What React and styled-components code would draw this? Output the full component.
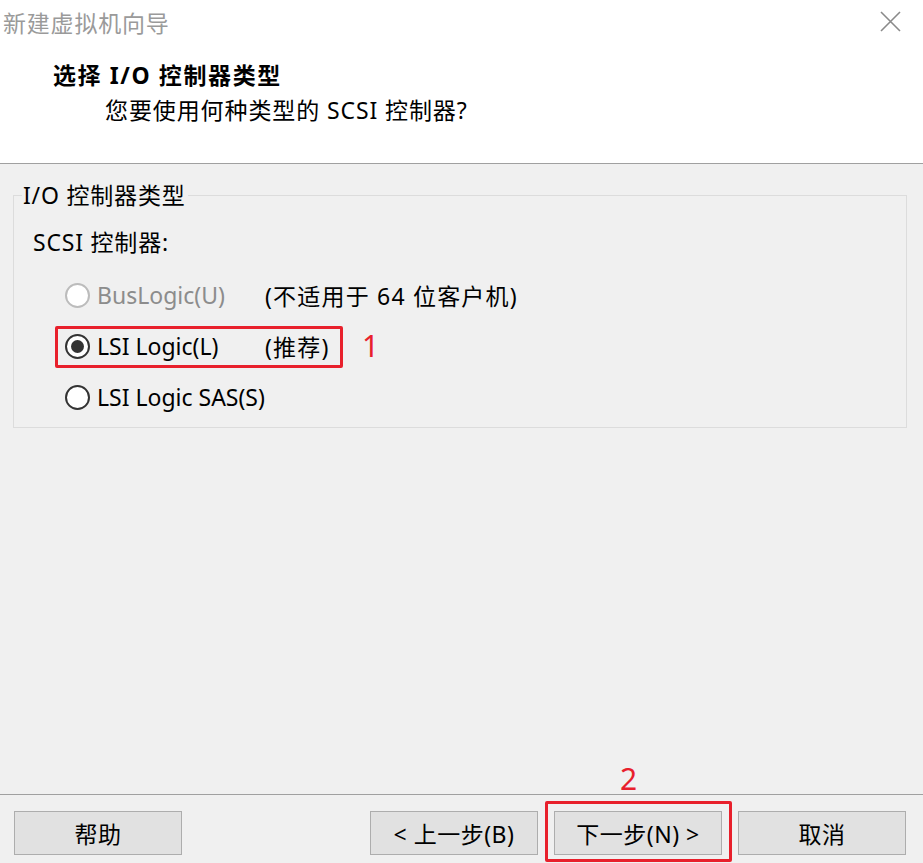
import * as React from 'react';
import styled, {createGlobalStyle} from 'styled-components';

const GlobalStyle = createGlobalStyle`
  html, body {
    margin: 0;
    padding: 0;
    background: #f0f0f0;
  }
  body {
    font-family: "Noto Sans", "Noto Sans CJK SC", sans-serif;
    color: #000;
  }
`;

const Window = styled.div`
  width: 923px;
  height: 863px;
  display: flex;
  flex-direction: column;
  background: #f0f0f0;
  overflow: hidden;
`;

const Header = styled.div`
  height: 163px;
  background: #fff;
  border-bottom: 1px solid #a0a0a0;
  display: flex;
  flex-direction: column;
`;

const TitleBar = styled.div`
  height: 44px;
  display: flex;
  align-items: center;
  justify-content: space-between;
  padding: 0 22px 0 3px;
`;

const TitleText = styled.span`
  font-size: 23px;
  color: #9a9a9a;
  letter-spacing: 0.8px;
`;

const CloseIcon = styled.svg`
  width: 21px;
  height: 21px;
  margin-top: -1px;
`;

const Heading = styled.div`
  margin: 15px 0 0 53px;
  font-size: 23px;
  line-height: 32px;
  font-weight: 700;
  letter-spacing: 1.6px;
`;

const SubHeading = styled.div`
  margin: 3px 0 0 105px;
  font-size: 23px;
  line-height: 32px;
  letter-spacing: 0.9px;
`;

const Body = styled.div`
  flex: 1;
  padding: 16px 16px 0 13px;
`;

const Group = styled.fieldset`
  margin: 0;
  padding: 0 0 10px 8px;
  border: 1px solid #dcdcdc;
  min-width: 0;
`;

const Legend = styled.legend`
  padding: 0 2px 0 1px;
  font-size: 23px;
  line-height: 30px;
  letter-spacing: 0.8px;
`;

const FieldLabel = styled.div`
  margin: 16px 0 0 11px;
  font-size: 23px;
  line-height: 32px;
  letter-spacing: 0.8px;
`;

const Options = styled.div`
  margin: 17px 0 0 43px;
  display: flex;
  flex-direction: column;
  gap: 11px;
`;

const OptionRow = styled.div`
  position: relative;
  height: 40px;
  display: flex;
  align-items: center;
  font-size: 23px;
  color: ${p => (p.disabled ? '#8c8c8c' : '#000')};
`;

const Radio = styled.span`
  box-sizing: border-box;
  width: 25px;
  height: 25px;
  border-radius: 50%;
  border: 2px solid ${p => (p.disabled ? '#bcbcbc' : '#333')};
  background: #fff;
  display: flex;
  align-items: center;
  justify-content: center;
  flex: none;

  &::after {
    content: '';
    display: ${p => (p.checked ? 'block' : 'none')};
    width: 13px;
    height: 13px;
    border-radius: 50%;
    background: #333;
  }
`;

const OptionText = styled.span`
  width: 168px;
  margin-left: 7px;
  flex: none;
  white-space: nowrap;
`;

const OptionNote = styled.span`
  color: #000;
  white-space: nowrap;
  letter-spacing: 1.2px;
`;

const Mark = styled.span`
  position: absolute;
  box-sizing: border-box;
  border: 3px solid #e8202c;
  border-radius: 2px;
  pointer-events: none;
  left: ${p => p.left}px;
  top: ${p => p.top}px;
  width: ${p => p.w}px;
  height: ${p => p.h}px;
`;

const MarkNumber = styled.span`
  position: absolute;
  color: #e8202c;
  font-family: "Noto Sans", sans-serif;
  font-size: 30px;
  line-height: 30px;
  left: ${p => p.left}px;
  top: ${p => p.top}px;
`;

const Footer = styled.div`
  border-top: 1px solid #a0a0a0;
  padding: 16px 17px 8px 14px;
  display: flex;
  gap: 16px;
`;

const Spacer = styled.div`
  flex: 1;
`;

const ButtonWrap = styled.div`
  position: relative;
`;

const Button = styled.button`
  box-sizing: border-box;
  width: 168px;
  height: 44px;
  background: #e1e1e1;
  border: 1px solid #adadad;
  border-radius: 0;
  font-family: "Noto Sans", "Noto Sans CJK SC", sans-serif;
  font-size: 23px;
  color: #000;
  padding: 0;
  letter-spacing: 0.5px;
`;

export default function App() {
    return <Window>
        <GlobalStyle/>
        <Header>
            <TitleBar>
                <TitleText>新建虚拟机向导</TitleText>
                <CloseIcon viewBox="0 0 21 21">
                    <path d="M1 1L20 20M20 1L1 20" stroke="#8a8a8a" strokeWidth="1.6" fill="none"/>
                </CloseIcon>
            </TitleBar>
            <Heading>选择 I/O 控制器类型</Heading>
            <SubHeading>您要使用何种类型的 SCSI 控制器?</SubHeading>
        </Header>
        <Body>
            <Group>
                <Legend>I/O 控制器类型</Legend>
                <FieldLabel>SCSI 控制器:</FieldLabel>
                <Options>
                    <OptionRow disabled>
                        <Radio disabled/>
                        <OptionText>BusLogic(U)</OptionText>
                        <OptionNote>(不适用于 64 位客户机)</OptionNote>
                    </OptionRow>
                    <OptionRow>
                        <Radio checked/>
                        <OptionText>LSI Logic(L)</OptionText>
                        <OptionNote>(推荐)</OptionNote>
                        <Mark left={-10} top={0} w={288} h={42}/>
                        <MarkNumber left={297} top={5}>1</MarkNumber>
                    </OptionRow>
                    <OptionRow>
                        <Radio/>
                        <OptionText>LSI Logic SAS(S)</OptionText>
                    </OptionRow>
                </Options>
            </Group>
        </Body>
        <Footer>
            <Button>帮助</Button>
            <Spacer/>
            <Button>&lt; 上一步(B)</Button>
            <ButtonWrap>
                <Button>下一步(N) &gt;</Button>
                <Mark left={-9} top={-10} w={187} h={61}/>
                <MarkNumber left={66} top={-47}>2</MarkNumber>
            </ButtonWrap>
            <Button>取消</Button>
        </Footer>
    </Window>;
}
